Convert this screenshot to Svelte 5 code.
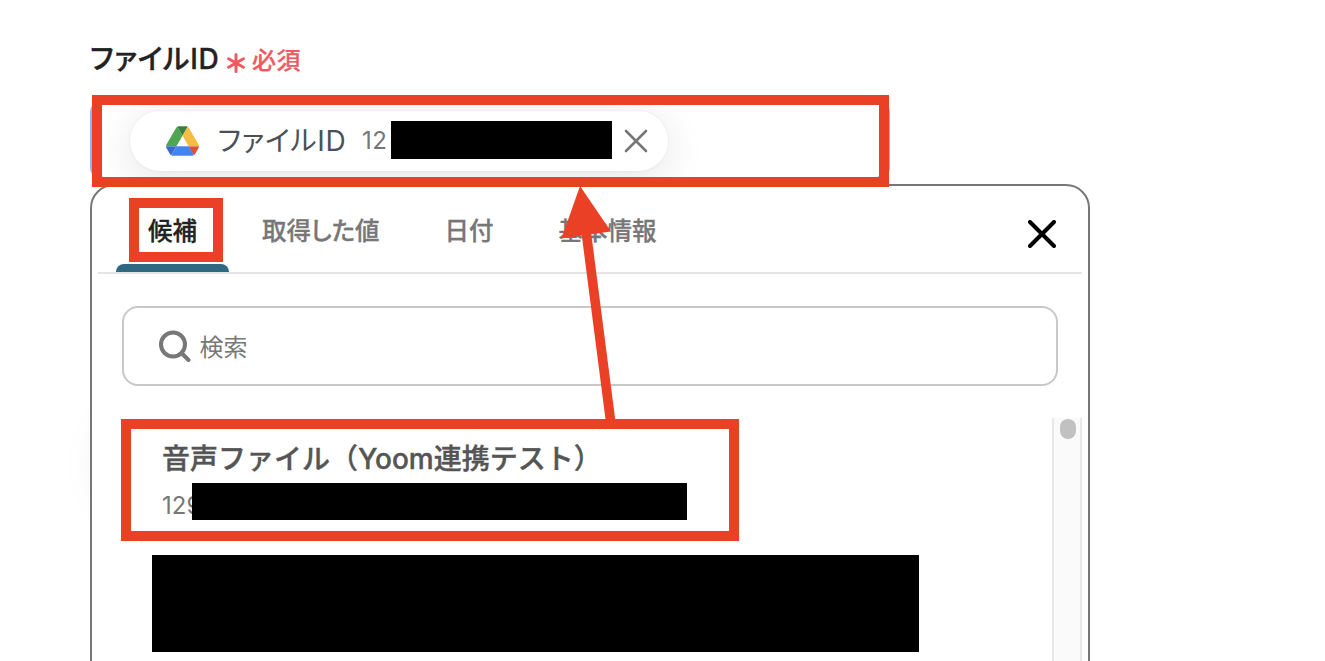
<script>
	let active = 0;
	let keyword = '';
	const tabs = ['候補', '取得した値', '日付', '基本情報'];
	const items = [{ title: '音声ファイル（Yoom連携テスト）', id: '129' }];
</script>

<main>
	<div class="label">
		<span class="name">ファイルID</span>
		<svg class="asterisk" width="18" height="20" viewBox="0 0 18 20">
			<path d="M9 1.5v17M1.6 5.7l14.8 8.6M16.4 5.7L1.6 14.3" />
		</svg>
		<span class="required">必須</span>
	</div>

	<div class="field">
		<div class="chip">
			<svg class="drive" width="33" height="30" viewBox="0 0 87.3 78">
				<path fill="#3c67d6" d="m6.6 66.85 3.85 6.65c.8 1.4 1.95 2.5 3.3 3.3l13.75-23.8h-27.5c0 1.55.4 3.1 1.2 4.5z" />
				<path fill="#4ea653" d="m43.65 25-13.75-23.8c-1.35.8-2.5 1.9-3.3 3.3l-25.4 44a9.06 9.06 0 0 0 -1.2 4.5h27.5z" />
				<path fill="#d9523f" d="m73.55 76.8c1.35-.8 2.5-1.9 3.3-3.3l1.6-2.75 7.65-13.25c.8-1.4 1.2-2.95 1.2-4.5h-27.5l5.85 11.5z" />
				<path fill="#3a7f3b" d="m43.65 25 13.75-23.8c-1.35-.8-2.9-1.2-4.5-1.2h-18.5c-1.6 0-3.15.45-4.5 1.2z" />
				<path fill="#4483f3" d="m59.8 53h-32.3l-13.75 23.8c1.35.8 2.9 1.2 4.5 1.2h50.8c1.6 0 3.15-.45 4.5-1.2z" />
				<path fill="#f6bd42" d="m73.4 26.5-12.7-22c-.8-1.4-1.95-2.5-3.3-3.3l-13.75 23.8 16.15 28h27.45c0-1.55-.4-3.1-1.2-4.5z" />
			</svg>
			<span class="chip-name">ファイルID</span>
			<span class="chip-value">12</span>
			<span class="mask chip-mask"></span>
			<svg class="remove" width="24" height="24" viewBox="0 0 24 24">
				<path d="M2 2l20 20M22 2L2 22" />
			</svg>
		</div>
	</div>

	<div class="behind"></div>

	<section class="panel">
		<nav>
			{#each tabs as tab, i}
				<button class="tab" class:active={active === i} on:click={() => (active = i)}>{tab}</button>
			{/each}
			<button class="close" aria-label="閉じる">
				<svg width="28" height="28" viewBox="0 0 28 28">
					<path d="M2 2l24 24M26 2L2 26" />
				</svg>
			</button>
		</nav>

		<div class="search">
			<svg width="32" height="32" viewBox="0 0 32 32">
				<circle cx="14" cy="14.5" r="12" />
				<path d="M22.5 23l7 7" />
			</svg>
			<input type="text" placeholder="検索" bind:value={keyword} />
		</div>

		<div class="results">
			<div class="list">
				{#each items as item}
					<div class="item">
						<div class="item-title">{item.title}</div>
						<div class="item-id"><span>{item.id}</span><span class="mask id-mask"></span></div>
					</div>
				{/each}
				<div class="mask item-mask"></div>
			</div>
			<div class="scrollbar"><div class="thumb"></div></div>
		</div>
	</section>

	<!-- annotations over the form -->
	<div class="frame frame-field"></div>
	<div class="frame frame-tab"></div>
	<div class="frame frame-item"></div>
	<svg class="arrow" width="60" height="240" viewBox="0 0 60 240">
		<path d="M20 0L51 45.5L31.3 48.2L55.3 234H45.6L21.8 49.5L1.5 52.5Z" />
	</svg>
</main>

<style>
:global(body) {
	background: #fff;
	font-family: Inter, "Noto Sans CJK JP", sans-serif;
}

* {
	box-sizing: border-box;
}

main {
	position: relative;
	width: 1325px;
	height: 661px;
	padding: 40px 90px 0;
	overflow: hidden;
	background: #fff;
}

svg {
	flex: none;
	fill: none;
	stroke-linecap: round;
}

button {
	border: none;
	background: none;
	font-family: inherit;
	cursor: pointer;
}

.label {
	display: flex;
	align-items: center;
	height: 40px;
}

.name {
	width: 137px;
	padding-bottom: 6px;
	font-size: 28px;
	font-weight: 500;
	font-feature-settings: "palt";
	letter-spacing: 0.8px;
	color: #222;
	white-space: nowrap;
	-webkit-text-stroke: 0.4px #222;
}

.asterisk {
	margin-top: 5px;
	stroke: #ee5a5f;
	stroke-width: 3;
}

.required {
	margin-left: 7px;
	padding-bottom: 4px;
	font-size: 24px;
	font-weight: 500;
	letter-spacing: 0.4px;
	color: #ee5a5f;
	-webkit-text-stroke: 0.25px #ee5a5f;
}

.field {
	width: 800px;
	height: 82px;
	margin-top: 19px;
	padding: 8px 0 0 36px;
	border: 4px solid #8ab8fb;
	border-radius: 14px;
	overflow: hidden;
}

.chip {
	display: flex;
	align-items: center;
	width: 538px;
	height: 60px;
	padding-left: 36px;
	border-radius: 30px;
	background: #fff;
	box-shadow: 0 8px 40px rgba(0, 0, 0, 0.11), 0 0 2px 1px rgba(0, 0, 0, 0.03);
}

.drive {
	margin-left: -0.5px;
	stroke: none;
}

.chip-name {
	width: 144.5px;
	margin-left: 19px;
	padding-bottom: 4px;
	font-size: 28px;
	font-feature-settings: "palt";
	letter-spacing: 0.7px;
	color: #4b5058;
	white-space: nowrap;
}

.chip-value {
	width: 29px;
	padding-bottom: 1px;
	font-size: 24px;
	letter-spacing: 0.6px;
	color: #777;
}

.mask {
	flex: none;
	background: #000;
}

.chip-mask {
	width: 221px;
	height: 38px;
	margin-top: -2px;
}

.remove {
	margin-left: 12px;
	stroke: #777;
	stroke-width: 2.6;
}

/* chip of the next field, hidden behind the panel */
.behind {
	position: absolute;
	top: 433px;
	left: 116px;
	width: 300px;
	height: 60px;
	border-radius: 30px;
	box-shadow: 0 0 50px rgba(0, 0, 0, 0.28);
}

.panel {
	position: relative;
	width: 1000px;
	height: 600px;
	margin-top: 3px;
	padding: 0 6px;
	border: 2px solid #777;
	border-radius: 24px;
	background: #fff;
}

nav {
	display: flex;
	gap: 1px;
	height: 88px;
	padding-left: 18px;
	border-bottom: 2px solid #e4e4e4;
}

.tab {
	padding: 9px 32px 0;
	border-bottom: 8px solid transparent;
	font-size: 24.5px;
	font-weight: 500;
	font-feature-settings: "palt";
	color: #777;
	-webkit-text-stroke: 0.3px #777;
}

.tab.active {
	position: relative;
	color: #222;
	-webkit-text-stroke-color: #222;
}

.tab.active::after {
	content: "";
	position: absolute;
	left: 0;
	right: 0;
	bottom: -8px;
	height: 8px;
	border-radius: 8px 8px 0 0;
	background: #2f6881;
}

.close {
	display: flex;
	align-items: center;
	margin-left: auto;
	padding: 10px 26px 0;
	stroke: #000;
	stroke-width: 4;
}

.search {
	display: flex;
	align-items: center;
	width: 936px;
	height: 80px;
	margin: 32px 24px 0;
	padding-left: 34.5px;
	border: 2px solid #c8c8c8;
	border-radius: 16px;
}

.search svg {
	stroke: #777;
	stroke-width: 4;
}

.search input {
	flex: 1;
	margin-right: 20px;
	padding: 2px 0 0 9px;
	border: none;
	outline: none;
	font-family: inherit;
	font-size: 24px;
	color: #333;
}

.search input::placeholder {
	color: #777;
}

.results {
	display: flex;
	justify-content: space-between;
	height: 260px;
	margin-top: 32px;
}

.list {
	padding-left: 54px;
}

.item {
	height: 137px;
	padding: 21px 10px 0;
}

.item-title {
	height: 40px;
	font-size: 28px;
	font-weight: 500;
	line-height: 40px;
	color: #555;
	white-space: nowrap;
	-webkit-text-stroke: 0.4px #555;
}

.item-id {
	display: flex;
	align-items: center;
	height: 37px;
	margin-top: 4px;
	font-size: 24px;
	color: #777;
}

.item-id span:first-child {
	width: 30px;
	padding-top: 7px;
}

.id-mask {
	width: 495px;
	height: 37px;
	z-index: 1;
}

.item-mask {
	width: 767px;
	height: 97px;
}

.scrollbar {
	width: 30px;
	padding: 1px 6px;
	border: solid #e8e8e8;
	border-width: 0 2px;
	background: #fafafa;
}

.thumb {
	width: 16px;
	height: 20px;
	border-radius: 8px;
	background: #c1c1c1;
}

.frame {
	position: absolute;
	border: 10px solid #ea4126;
}

.frame-field {
	top: 95px;
	left: 92px;
	width: 797px;
	height: 92px;
}

.frame-tab {
	top: 198px;
	left: 129px;
	width: 94px;
	height: 64px;
}

.frame-item {
	top: 419px;
	left: 121px;
	width: 618px;
	height: 122px;
}

.arrow {
	position: absolute;
	top: 186px;
	left: 560px;
	fill: #ea4126;
}
</style>
